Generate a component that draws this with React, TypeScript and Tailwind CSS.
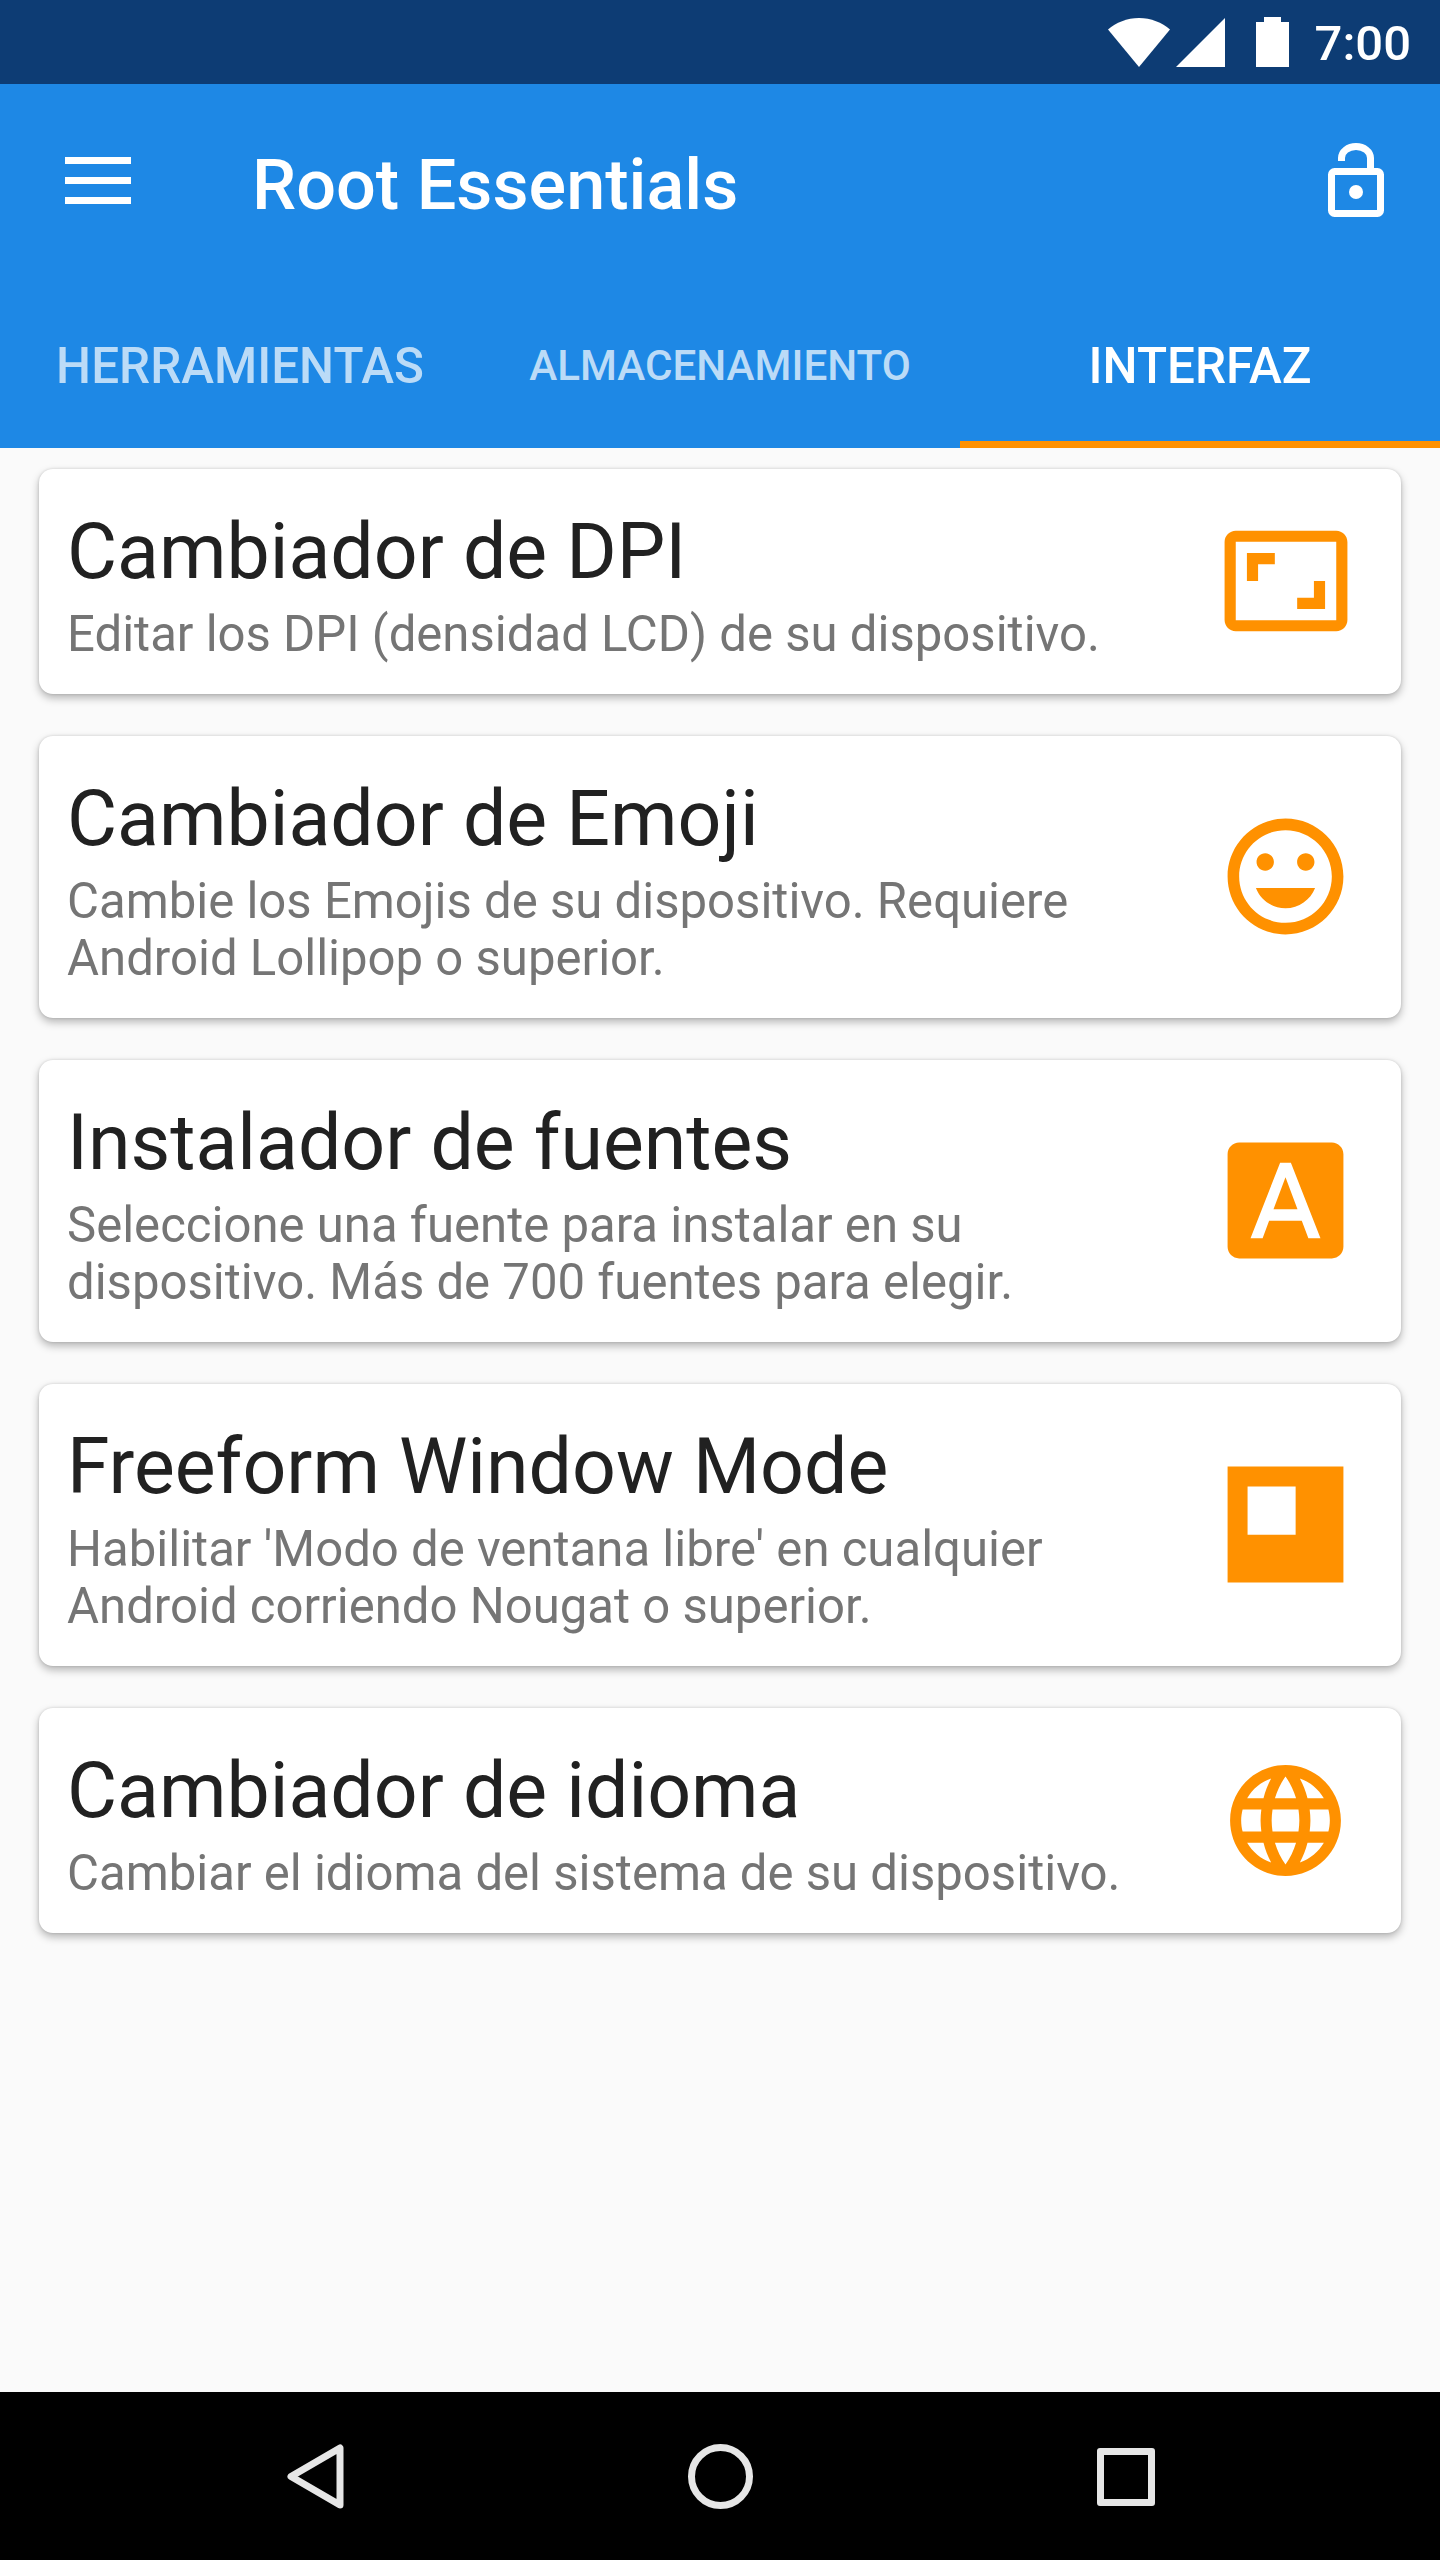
const ORANGE = "#ff9100";

interface CardData {
  title: string;
  lines: string[];
  icon: React.ReactNode;
}

const faPaths = {
  dpi: "M19 12h-2v3h-3v2h5v-5zM7 9h3V7H5v5h2V9zm14-6H3c-1.1 0-2 .9-2 2v14c0 1.1.9 2 2 2h18c1.1 0 2-.9 2-2V5c0-1.1-.9-2-2-2zm0 16.01H3V4.99h18v14.02z",
  face: "M11.99 2C6.47 2 2 6.48 2 12s4.47 10 9.99 10C17.52 22 22 17.52 22 12S17.52 2 11.99 2zM12 20c-4.42 0-8-3.58-8-8s3.58-8 8-8 8 3.58 8 8-3.58 8-8 8zm3.5-9c.83 0 1.5-.67 1.5-1.5S16.33 8 15.5 8 14 8.67 14 9.5s.67 1.5 1.5 1.5zm-7 0c.83 0 1.5-.67 1.5-1.5S9.33 8 8.5 8 7 8.67 7 9.5 7.67 11 8.5 11zm3.5 6.5c2.33 0 4.31-1.46 5.11-3.5H6.89c.8 2.04 2.78 3.5 5.11 3.5z",
  font: "M9.93 13.5h4.14L12 7.98zM20 2H4c-1.1 0-2 .9-2 2v16c0 1.1.9 2 2 2h16c1.1 0 2-.9 2-2V4c0-1.1-.9-2-2-2zm-4.05 16.5l-1.14-3H9.17l-1.12 3H5.96l5.11-13h1.86l5.11 13h-2.09z",
  freeform: "M2 2h20v20H2zM5.45 5.45v8.3h8.3v-8.3z",
  globe: "M11.99 2C6.47 2 2 6.48 2 12s4.47 10 9.99 10C17.52 22 22 17.52 22 12S17.52 2 11.99 2zm6.93 6h-2.95c-.32-1.25-.78-2.45-1.38-3.56 1.84.63 3.37 1.91 4.33 3.56zM12 4.04c.83 1.2 1.48 2.53 1.91 3.96h-3.82c.43-1.43 1.08-2.76 1.91-3.96zM4.26 14C4.1 13.36 4 12.69 4 12s.1-1.36.26-2h3.38c-.08.66-.14 1.32-.14 2 0 .68.06 1.34.14 2H4.26zm.82 2h2.95c.32 1.25.78 2.45 1.38 3.56-1.84-.63-3.37-1.9-4.33-3.56zm2.95-8H5.08c.96-1.66 2.49-2.93 4.33-3.56C8.81 5.55 8.35 6.75 8.03 8zM12 19.96c-.83-1.2-1.48-2.53-1.91-3.96h3.82c-.43 1.43-1.08 2.76-1.91 3.96zM14.34 14H9.66c-.09-.66-.16-1.32-.16-2 0-.68.07-1.35.16-2h4.68c.09.65.16 1.32.16 2 0 .68-.07 1.34-.16 2zm.25 5.56c.6-1.11 1.06-2.31 1.38-3.56h2.95c-.96 1.65-2.49 2.93-4.33 3.56zM16.36 14c.08-.66.14-1.32.14-2 0-.68-.06-1.34-.14-2h3.38c.16.64.26 1.31.26 2s-.1 1.36-.26 2h-3.38z",
};

function MaterialIcon({ d, size }: { d: string; size: number }) {
  return (
    <svg width={size} height={size} viewBox="0 0 24 24" fill={ORANGE} fillRule="evenodd">
      <path d={d} />
    </svg>
  );
}

const cards: CardData[] = [
  {
    title: "Cambiador de DPI",
    lines: ["Editar los DPI (densidad LCD) de su dispositivo."],
    icon: <MaterialIcon d={faPaths.dpi} size={134} />,
  },
  {
    title: "Cambiador de Emoji",
    lines: ["Cambie los Emojis de su dispositivo. Requiere", "Android Lollipop o superior."],
    icon: <MaterialIcon d={faPaths.face} size={139} />,
  },
  {
    title: "Instalador de fuentes",
    lines: ["Seleccione una fuente para instalar en su", "dispositivo. Más de 700 fuentes para elegir."],
    icon: <MaterialIcon d={faPaths.font} size={139} />,
  },
  {
    title: "Freeform Window Mode",
    lines: ["Habilitar 'Modo de ventana libre' en cualquier", "Android corriendo Nougat o superior."],
    icon: <MaterialIcon d={faPaths.freeform} size={139} />,
  },
  {
    title: "Cambiador de idioma",
    lines: ["Cambiar el idioma del sistema de su dispositivo."],
    icon: <MaterialIcon d={faPaths.globe} size={133} />,
  },
];

function StatusBar() {
  return (
    <div className="flex h-[84px] items-center justify-end bg-[#0d3c74] pr-[29px] text-white">
      <svg width="62" height="49" viewBox="0 0 62 49" fill="#fff">
        <path d="M0 11.5C8 4.5 19 0 31 0s23 4.5 31 11.5L31 49z" />
      </svg>
      <svg width="49" height="49" viewBox="0 0 49 49" fill="#fff" className="ml-[6px]">
        <path d="M0 49L49 0v49z" />
      </svg>
      <svg width="33" height="50" viewBox="0 0 33 50" fill="#fff" className="ml-[31px]">
        <path d="M8 0h17v5h8v45H0V5h8z" />
      </svg>
      <span className="ml-[26px] mt-[2px] text-[49px] leading-none font-medium font-[Roboto,sans-serif]">7:00</span>
    </div>
  );
}

function Toolbar() {
  return (
    <div className="flex h-[196px] items-center bg-[#1e88e5] text-white">
      <div className="ml-[65px] mb-[4px] flex w-[66px] flex-col gap-[13px]">
        <div className="h-[7px] bg-white" />
        <div className="h-[7px] bg-white" />
        <div className="h-[7px] bg-white" />
      </div>
      <div className="ml-[121px] mt-[6px] flex-1 text-[70.2px] leading-none font-medium font-[Roboto,sans-serif]">
        Root Essentials
      </div>
      <svg width="56" height="74" viewBox="0 0 56 74" fill="none" className="mr-[56px] mb-[4px]">
        <path d="M13.5 18v-3a14.5 11.500 0 0 1 29 0v10" stroke="#fff" strokeWidth="7" />
        <rect x="3.5" y="28.500" width="49" height="42" rx="3" stroke="#fff" strokeWidth="7" />
        <circle cx="28" cy="49" r="7" fill="#fff" />
      </svg>
    </div>
  );
}

function Tabs() {
  return (
    <div className="flex h-[168px] bg-[#1e88e5] font-[Roboto,sans-serif] font-medium">
      <div className="flex w-[480px] items-center justify-center pt-[4px] text-[49.4px] text-[#bbdbf7]">
        HERRAMIENTAS
      </div>
      <div className="flex w-[480px] items-center justify-center pt-[4px] text-[42.2px] text-[#bbdbf7]">
        ALMACENAMIENTO
      </div>
      <div className="flex w-[480px] items-center justify-center border-b-[7px] border-[#ff9100] pt-[11px] text-[49.4px] text-white">
        INTERFAZ
      </div>
    </div>
  );
}

function Card({ card }: { card: CardData }) {
  return (
    <div className="flex items-center rounded-[14px] bg-white pt-[30px] pb-[31px] pl-[28px] shadow-[0_4px_8px_rgba(0,0,0,0.28),0_0_3px_rgba(0,0,0,0.14)]">
      <div className="flex-1">
        <div className="text-[77px] leading-[107px] text-[#212121]">{card.title}</div>
        {card.lines.map((line) => (
          <div key={line} className="text-[49.1px] leading-[57px] text-[#757575]">
            {line}
          </div>
        ))}
      </div>
      <div className="flex w-[231px] justify-center">{card.icon}</div>
    </div>
  );
}

function NavBar() {
  return (
    <div className="flex h-[168px] items-start bg-black pt-[52px]">
      <svg width="57" height="65" viewBox="0 0 57 65" fill="none" className="ml-[287px]">
        <path d="M53 4v57L4 32.500z" stroke="#e6e6e6" strokeWidth="7" strokeLinejoin="round" />
      </svg>
      <svg width="65" height="65" viewBox="0 0 65 65" fill="none" className="ml-[344px]">
        <circle cx="32.500" cy="32.500" r="29" stroke="#e6e6e6" strokeWidth="7" />
      </svg>
      <div className="ml-[344px] mt-[4px] h-[58px] w-[58px] rounded-[3px] border-[7px] border-[#e6e6e6]" />
    </div>
  );
}

export default function App() {
  return (
    <div className="flex h-[2560px] w-[1440px] flex-col bg-[#fafafa] font-[Roboto,sans-serif]">
      <StatusBar />
      <Toolbar />
      <Tabs />
      <div className="flex flex-1 flex-col gap-[42px] px-[39px] pt-[21px]">
        {cards.map((card) => (
          <Card key={card.title} card={card} />
        ))}
      </div>
      <NavBar />
    </div>
  );
}
